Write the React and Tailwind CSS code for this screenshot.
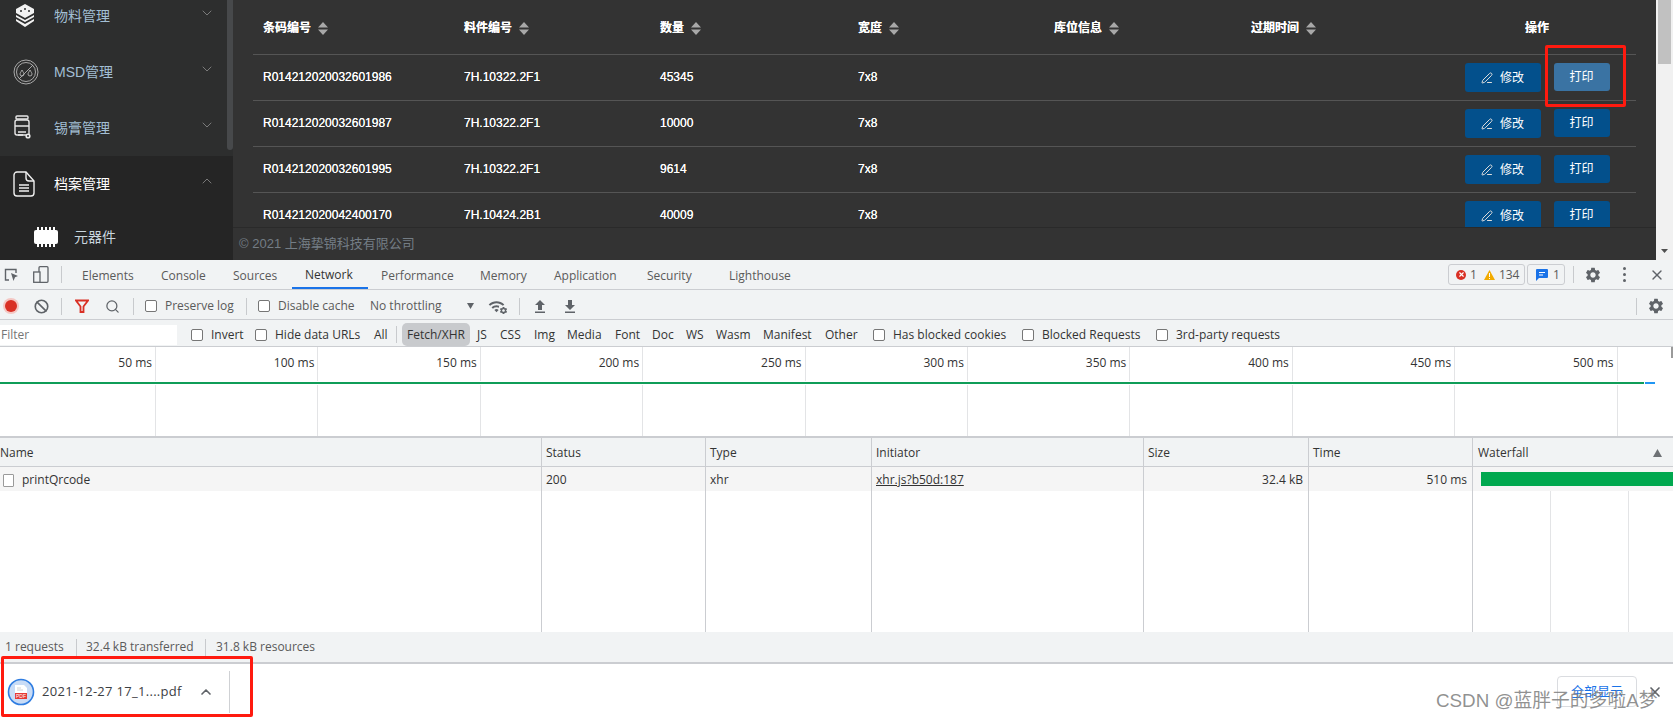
import { ChevronDown, ChevronUp, PenLine, Search, Ban, X } from 'lucide-react'
import { MdSettings, MdWifi } from 'react-icons/md'

const rows = [
  { code: 'R014212020032601986', part: '7H.10322.2F1', qty: '45345', hot: true },
  { code: 'R014212020032601987', part: '7H.10322.2F1', qty: '10000' },
  { code: 'R014212020032601995', part: '7H.10322.2F1', qty: '9614' },
  { code: 'R014212020042400170', part: '7H.10424.2B1', qty: '40009' },
]

const headers = ['条码编号', '料件编号', '数量', '宽度', '库位信息', '过期时间']

function StackIcon() {
  return (
    <svg width="24" height="26" viewBox="0 0 24 26" fill="#f2f2f2">
      <path d="M12 1l9 5v4l-9 5-9-5V6z" />
      <path d="M3 12l9 5 9-5v2l-9 5-9-5z" />
      <path d="M3 16l9 5 9-5v2l-9 6-9-6z" />
      <circle cx="12" cy="6" r="1" fill="#2d2e2e" />
      <circle cx="8" cy="8" r="1" fill="#2d2e2e" />
      <circle cx="16" cy="8" r="1" fill="#2d2e2e" />
    </svg>
  )
}

function MsdIcon() {
  return (
    <svg width="26" height="26" viewBox="0 0 26 26" fill="none" stroke="#b5b5b5" strokeWidth="0.9">
      <circle cx="13" cy="13" r="12" />
      <circle cx="13" cy="13" r="9.500" />
      <path d="M6 20L20 6" />
      <path d="M9 11c-1 2-2 3-2 4a2 2 0 0 0 4 0c0-1-1-2-2-4zM17 11c-1 2-2 3-2 4a2 2 0 0 0 4 0c0-1-1-2-2-4z" />
    </svg>
  )
}

function JarIcon() {
  return (
    <svg width="20" height="26" viewBox="0 0 20 26" fill="none" stroke="#e8e8e8" strokeWidth="1.400">
      <rect x="3" y="1" width="12" height="3" rx="1" />
      <path d="M2 7a2 2 0 0 1 2-2h10a2 2 0 0 1 2 2v13H4a2 2 0 0 1-2-2z" />
      <path d="M2 11h14M5 17h8M5 20h5" />
      <circle cx="15" cy="21" r="2.600" fill="#e8e8e8" stroke="none" />
      <circle cx="15" cy="21" r="1" fill="#2d2e2e" stroke="none" />
    </svg>
  )
}

function FileIcon() {
  return (
    <svg width="22" height="26" viewBox="0 0 22 26" fill="none" stroke="#f0f0f0" strokeWidth="1.400">
      <path d="M4 1h9l8 9v12a3 3 0 0 1-3 3H4a3 3 0 0 1-3-3V4a3 3 0 0 1 3-3z" />
      <path d="M13 1v6a3 3 0 0 0 3 3h5" />
      <path d="M6 14h10M6 17h10M6 20h10" />
    </svg>
  )
}

function ChipIcon() {
  return (
    <svg width="24" height="20" viewBox="0 0 24 20" fill="#ffffff">
      <rect x="0" y="3" width="24" height="14" rx="2" />
      <path d="M3 0h2v3H3zM7 0h2v3H7zM11 0h2v3h-2zM15 0h2v3h-2zM19 0h2v3h-2zM3 17h2v3H3zM7 17h2v3H7zM11 17h2v3h-2zM15 17h2v3h-2zM19 17h2v3h-2z" />
    </svg>
  )
}

function SideItem({ icon, label, open }) {
  return (
    <div className={`h-[56px] flex items-center ${open ? 'text-white' : 'text-[#a3bfd4]'}`}>
      <div className="w-[54px] pl-[13px] shrink-0 flex justify-start">{icon}</div>
      <span className="flex-1 text-[14px]">{label}</span>
      {open ? (
        <ChevronUp size={16} strokeWidth={1.25} className="text-[#8a8a8a] mr-[18px] -translate-y-[3px]" />
      ) : (
        <ChevronDown size={16} strokeWidth={1.25} className="text-[#8a8a8a] mr-[18px] -translate-y-[3px]" />
      )}
    </div>
  )
}

function Sidebar() {
  return (
    <aside className="relative w-[233px] shrink-0 bg-[#2d2e2e] overflow-hidden">
      <div className="-mt-[12px]">
        <SideItem icon={<StackIcon />} label="物料管理" />
        <SideItem icon={<MsdIcon />} label="MSD管理" />
        <SideItem icon={<JarIcon />} label="锡膏管理" />
        <div className="bg-[#252525] h-[200px]">
          <SideItem icon={<FileIcon />} label="档案管理" open />
          <div className="h-[50px] flex items-center pl-[34px] text-[14px] text-[#c9d6df]">
            <ChipIcon />
            <span className="ml-[16px]">元器件</span>
          </div>
        </div>
      </div>
      <div className="absolute right-0 top-0 w-[6px] h-[150px] bg-[#47494b] rounded-b-[3px]" />
    </aside>
  )
}

function SortCaret() {
  return (
    <svg width="10" height="13" viewBox="0 0 10 13" fill="#a8a8a8" className="ml-[7px]">
      <path d="M5 0l5 5.500H0zM5 13l5-5.500H0z" />
    </svg>
  )
}

function RecordTable() {
  return (
    <div className="ml-[20px] w-[1383px] text-[12px] text-white [text-shadow:0_0_0.6px_#ffffff]">
      <div className="grid grid-cols-[201px_196px_198px_196px_197px_197px_198px] h-[55px] pt-[2px] border-b border-[#555555] items-center font-bold">
        {headers.map((h) => (
          <div key={h} className="pl-[10px] flex items-center">
            {h}
            <SortCaret />
          </div>
        ))}
        <div className="text-center">操作</div>
      </div>
      {rows.map((r) => (
        <div
          key={r.code}
          className="grid grid-cols-[201px_196px_198px_196px_197px_197px_198px] h-[46px] border-b border-[#555555] items-center"
        >
          <div className="pl-[10px] pb-[2px]">{r.code}</div>
          <div className="pl-[10px] pb-[2px]">{r.part}</div>
          <div className="pl-[10px] pb-[2px]">{r.qty}</div>
          <div className="pl-[10px] pb-[2px]">7x8</div>
          <div />
          <div />
          <div className="flex justify-center gap-[13px]">
            <button className="w-[76px] h-[29px] rounded-[3px] bg-[#03508c] flex items-center justify-center gap-[7px]">
              <PenLine size={12} className="text-[#dddddd]" />
              修改
            </button>
            <button className={`w-[56px] h-[28px] rounded-[3px] ${r.hot ? 'bg-[#3a73a3]' : 'bg-[#03508c]'}`}>
              打印
            </button>
          </div>
        </div>
      ))}
    </div>
  )
}

function PageScrollbar() {
  return (
    <div className="w-[17px] shrink-0 bg-[#f1f1f1] flex flex-col justify-between">
      <div className="h-[64px] mt-0 bg-[#c1c1c1] mx-[2px]" />
      <svg width="17" height="17" viewBox="0 0 17 17" fill="#505050">
        <path d="M5 6h7l-3.500 4z" />
      </svg>
    </div>
  )
}

function AppShell() {
  return (
    <div className="h-[260px] flex bg-[#333333] overflow-hidden">
      <Sidebar />
      <main className="flex-1 min-w-0 flex flex-col">
        <div className="h-[227px] overflow-hidden">
          <RecordTable />
        </div>
        <div className="flex-1 border-t border-[#2a2a2a] pl-[6px] flex items-center text-[13px] text-[#747d85]">
          © 2021 上海挚锦科技有限公司
        </div>
      </main>
      <PageScrollbar />
    </div>
  )
}

function Divider({ className = '' }) {
  return <div className={`w-px h-[17px] bg-[#c8cacd] shrink-0 ${className}`} />
}

function Check({ className = '' }) {
  return <span className={`w-[12px] h-[12px] shrink-0 bg-white border border-[#767676] rounded-[2px] ${className}`} />
}

function TabsRow() {
  return (
    <div className="h-[30px] flex items-center border-b border-[#cbcdd1] text-[#5a5a5a] text-[12px]">
      <svg width="16" height="14" viewBox="0 0 16 14" className="ml-[4px] shrink-0" fill="none" stroke="#5f6368" strokeWidth="1.400">
        <path d="M5 12H1.500V1.500H12V5" />
        <path d="M7 5l7 3-3 1.300L9.500 13z" fill="#5f6368" stroke="none" />
      </svg>
      <svg width="16" height="17" viewBox="0 0 16 17" className="ml-[13px] shrink-0" fill="none" stroke="#5f6368" strokeWidth="1.300">
        <rect x="6" y="0.700" width="9" height="15.600" rx="1" />
        <rect x="0.700" y="6" width="6.300" height="10.300" fill="#f1f3f4" />
      </svg>
      <Divider className="ml-[12px]" />
      <div className="flex h-full">
        <Tab className="w-[79px] ml-[7px]">Elements</Tab>
        <Tab className="w-[72px]">Console</Tab>
        <Tab className="w-[72px]">Sources</Tab>
        <Tab className="w-[76px] text-[#333333] border-b-2 border-[#1a73e8]">Network</Tab>
        <Tab className="w-[99px]">Performance</Tab>
        <Tab className="w-[74px]">Memory</Tab>
        <Tab className="w-[93px]">Application</Tab>
        <Tab className="w-[82px]">Security</Tab>
        <Tab className="w-[90px]">Lighthouse</Tab>
      </div>
      <div className="ml-auto flex items-center">
        <div className="w-[77px] h-[21px] border border-[#cbcdd1] rounded-[3px] flex items-center text-[12px]">
          <span className="ml-[7px] w-[10px] h-[10px] rounded-full bg-[#d93025] text-white flex items-center justify-center">
            <X size={7} strokeWidth={4} />
          </span>
          <span className="ml-[4px]">1</span>
          <svg width="11" height="10" viewBox="0 0 11 10" className="ml-[7px]">
            <path d="M5.500 0L11 10H0z" fill="#f2ab00" />
            <path d="M5 3h1v4H5zM5 8h1v1H5z" fill="#ffffff" />
          </svg>
          <span className="ml-[4px]">134</span>
        </div>
        <div className="ml-[2px] w-[38px] h-[21px] border border-[#cbcdd1] rounded-[3px] flex items-center">
          <svg width="12" height="12" viewBox="0 0 12 12" className="ml-[8px]">
            <path d="M1 0h10a1 1 0 0 1 1 1v7a1 1 0 0 1-1 1H3l-3 3V1a1 1 0 0 1 1-1z" fill="#1a73e8" />
            <path d="M3 3h6v1H3zM3 5.500h4v1H3z" fill="#ffffff" />
          </svg>
          <span className="ml-[5px]">1</span>
        </div>
        <Divider className="ml-[8px]" />
        <MdSettings size={18} className="ml-[10px] text-[#5f6368]" />
        <div className="ml-[21px] flex flex-col gap-[3px]">
          <span className="w-[3px] h-[3px] rounded-full bg-[#5f6368]" />
          <span className="w-[3px] h-[3px] rounded-full bg-[#5f6368]" />
          <span className="w-[3px] h-[3px] rounded-full bg-[#5f6368]" />
        </div>
        <X size={16} strokeWidth={2} className="ml-[23px] mr-[8px] text-[#5f6368]" />
      </div>
    </div>
  )
}

function Tab({ className = '', children }) {
  return <div className={`h-full pl-[13px] pt-[3px] flex items-center shrink-0 ${className}`}>{children}</div>
}

function NetworkToolbar() {
  return (
    <div className="h-[30px] pt-[3px] flex items-center border-b border-[#cbcdd1] text-[#5a5a5a] text-[12px]">
      <div className="w-[22px] flex justify-center shrink-0">
        <span className="w-[12px] h-[12px] rounded-full bg-[#d93025] ring-2 ring-[#f4c7c3]" />
      </div>
      <div className="w-[39px] flex justify-center shrink-0">
        <Ban size={15} strokeWidth={2.6} className="text-[#5f6368]" />
      </div>
      <Divider />
      <div className="w-[40px] flex justify-center shrink-0">
        <svg width="14" height="14" viewBox="0 0 14 14" fill="none" stroke="#d93025" strokeWidth="1.800">
          <path d="M1 1.500h12L8.500 7.500V13h-3V7.500z" />
        </svg>
      </div>
      <div className="w-[20px] flex justify-center shrink-0">
        <Search size={15} className="text-[#5f6368]" />
      </div>
      <Divider className="ml-[11px]" />
      <Check className="ml-[11px]" />
      <span className="ml-[8px] w-[73px] shrink-0">Preserve log</span>
      <Divider className="ml-[8px]" />
      <Check className="ml-[11px]" />
      <span className="ml-[8px] w-[92px] shrink-0">Disable cache</span>
      <span className="w-[98px] shrink-0">No throttling</span>
      <svg width="7" height="6" viewBox="0 0 7 6" fill="#5f6368" className="shrink-0 -ml-[1px]">
        <path d="M0 0h7L3.500 6z" />
      </svg>
      <div className="relative ml-[14px] shrink-0 w-[20px]">
        <MdWifi size={17} className="text-[#5f6368]" />
        <MdSettings size={9} className="absolute right-0 bottom-0 text-[#5f6368] bg-[#f1f3f4]" />
      </div>
      <Divider className="ml-[11px]" />
      <svg width="12" height="13" viewBox="0 0 12 13" fill="#5f6368" className="ml-[14px] shrink-0">
        <path d="M6 0l5 5H8v5H4V5H1zM1 11.500h10V13H1z" />
      </svg>
      <svg width="12" height="13" viewBox="0 0 12 13" fill="#5f6368" className="ml-[18px] shrink-0">
        <path d="M6 10l5-5H8V0H4v5H1zM1 11.500h10V13H1z" />
      </svg>
      <div className="ml-auto flex items-center">
        <Divider />
        <MdSettings size={18} className="ml-[10px] mr-[8px] text-[#5f6368]" />
      </div>
    </div>
  )
}

function FilterBar() {
  return (
    <div className="h-[27px] pt-[3px] flex items-center border-b border-[#cbcdd1] text-[#333333] text-[12px]">
      <div className="w-[177px] h-[20px] bg-white pl-[1px] text-[#757575] flex items-center shrink-0">Filter</div>
      <Check className="ml-[14px]" />
      <span className="ml-[8px] w-[44px] shrink-0">Invert</span>
      <Check />
      <span className="ml-[8px] w-[99px] shrink-0">Hide data URLs</span>
      <span className="w-[22px] shrink-0">All</span>
      <Divider />
      <span className="ml-[5px] w-[68px] h-[23px] rounded-[5px] bg-[#c8cacd] flex items-center justify-center shrink-0">
        Fetch/XHR
      </span>
      <span className="ml-[7px] w-[23px] shrink-0">JS</span>
      <span className="w-[34px] shrink-0">CSS</span>
      <span className="w-[33px] shrink-0">Img</span>
      <span className="w-[48px] shrink-0">Media</span>
      <span className="w-[37px] shrink-0">Font</span>
      <span className="w-[34px] shrink-0">Doc</span>
      <span className="w-[30px] shrink-0">WS</span>
      <span className="w-[47px] shrink-0">Wasm</span>
      <span className="w-[62px] shrink-0">Manifest</span>
      <span className="w-[48px] shrink-0">Other</span>
      <Check />
      <span className="ml-[8px] w-[129px] shrink-0">Has blocked cookies</span>
      <Check />
      <span className="ml-[8px] w-[114px] shrink-0">Blocked Requests</span>
      <Check />
      <span className="ml-[8px] shrink-0">3rd-party requests</span>
    </div>
  )
}

function Timeline() {
  const ticks = ['50 ms', '100 ms', '150 ms', '200 ms', '250 ms', '300 ms', '350 ms', '400 ms', '450 ms', '500 ms']
  return (
    <div className="relative h-[89px] bg-white flex overflow-hidden text-[12px] text-[#333333]">
      {ticks.map((t, i) => (
        <div
          key={t}
          className={`h-full shrink-0 border-r border-[#e3e4e6] text-right pr-[3px] pt-[7px] ${i === 0 ? 'w-[156px]' : 'w-[162.4px]'}`}
        >
          {t}
        </div>
      ))}
      <div className="absolute left-0 top-[35px] w-[1644px] h-[2px] bg-[#0f9d58] ring-1 ring-white" />
      <div className="absolute left-[1645px] top-[35px] w-[10px] h-[2px] bg-[#2196f3] ring-1 ring-white" />
      <div className="absolute right-0 top-0 w-[2px] h-[11px] bg-[#9a9a9a]" />
    </div>
  )
}

function RequestTable() {
  const cols = 'grid grid-cols-[542px_164px_166px_272px_165px_164px_1fr]'
  const cell = 'border-r border-[#cbcdd1] pl-[4px] pt-[2px] flex items-center'
  return (
    <div className="h-[196px] flex flex-col border-t-2 border-[#cbcdd1] text-[12px] text-[#333333]">
      <div className={`${cols} h-[29px] bg-[#f1f3f4] border-b border-[#cbcdd1] shrink-0`}>
        <div className="border-r border-[#cbcdd1] pt-[2px] flex items-center">Name</div>
        <div className={cell}>Status</div>
        <div className={cell}>Type</div>
        <div className={cell}>Initiator</div>
        <div className={cell}>Size</div>
        <div className={cell}>Time</div>
        <div className="pl-[5px] pr-[11px] pt-[2px] flex items-center justify-between">
          Waterfall
          <svg width="9" height="8" viewBox="0 0 9 8" fill="#6e7175">
            <path d="M4.500 0L9 8H0z" />
          </svg>
        </div>
      </div>
      <div className={`${cols} h-[24px] bg-[#f5f5f5] shrink-0`}>
        <div className="border-r border-[#cbcdd1] pt-[2px] flex items-center pl-[3px]">
          <span className="w-[11px] h-[13px] border border-[#9a9a9a] rounded-[1px] bg-white" />
          <span className="ml-[8px]">printQrcode</span>
        </div>
        <div className={cell}>200</div>
        <div className={cell}>xhr</div>
        <div className={`${cell} underline`}>xhr.js?b50d:187</div>
        <div className={`${cell} justify-end pr-[5px]`}>32.4 kB</div>
        <div className={`${cell} justify-end pr-[5px]`}>510 ms</div>
        <WaterfallBar />
      </div>
      <div className={`${cols} flex-1 bg-white`}>
        <div className="border-r border-[#cbcdd1]" />
        <div className="border-r border-[#cbcdd1]" />
        <div className="border-r border-[#cbcdd1]" />
        <div className="border-r border-[#cbcdd1]" />
        <div className="border-r border-[#cbcdd1]" />
        <div className="border-r border-[#cbcdd1]" />
        <div className="grid grid-cols-[78px_78px_1fr]">
          <div className="border-r border-[#e3e4e6]" />
          <div className="border-r border-[#e3e4e6]" />
          <div />
        </div>
      </div>
    </div>
  )
}

function WaterfallBar() {
  return (
    <div className="flex items-center pl-[8px] overflow-hidden">
      <div className="h-[14px] flex-1 bg-[#00a84f]" />
    </div>
  )
}

function StatusBar() {
  return (
    <div className="h-[32px] bg-[#f1f3f4] border-b-2 border-[#cbcdd1] flex items-center text-[12px] text-[#5a5a5a]">
      <span className="ml-[5px] w-[71px] shrink-0">1 requests</span>
      <Divider />
      <span className="ml-[9px] w-[119px] shrink-0">32.4 kB transferred</span>
      <Divider />
      <span className="ml-[10px]">31.8 kB resources</span>
    </div>
  )
}

function PdfBadge() {
  return (
    <svg width="28" height="28" viewBox="0 0 28 28" className="shrink-0">
      <circle cx="14" cy="14" r="12.500" fill="#c9dcf6" stroke="#2f7de1" strokeWidth="1.600" />
      <path d="M8 7h9l3 3v11H8z" fill="#ffffff" />
      <path d="M10 10h4M10 12h6" stroke="#c6c6c6" strokeWidth="0.800" />
      <rect x="8" y="15" width="12" height="6" fill="#e53935" />
      <text x="14" y="20" textAnchor="middle" fontSize="5" fill="#ffffff" fontFamily="Liberation Sans">PDF</text>
    </svg>
  )
}

function DownloadBar() {
  return (
    <div className="h-[55px] bg-white flex items-center">
      <div className="ml-[7px] flex items-center">
        <PdfBadge />
        <span className="ml-[7px] w-[156px] text-[13px] tracking-[0.3px] text-[#3c4043] shrink-0">2021-12-27 17_1....pdf</span>
        <ChevronUp size={16} strokeWidth={2.5} className="text-[#5f6368]" />
      </div>
      <div className="ml-[15px] w-px h-[42px] bg-[#cfd1d4]" />
      <div className="ml-auto flex items-center">
        <button className="w-[80px] h-[31px] border border-[#dadce0] rounded-[4px] text-[13px] text-[#1a73e8]">全部显示</button>
        <X size={16} strokeWidth={2.5} className="ml-[10px] mr-[10px] text-[#5f6368]" />
      </div>
    </div>
  )
}

export default function App() {
  return (
    <div className="relative w-[1673px] h-[719px] overflow-hidden bg-white font-['Liberation_Sans','Noto_Sans_CJK_SC',sans-serif]">
      <AppShell />
      <div className="bg-[#f1f3f4] font-['Open_Sans','Noto_Sans_CJK_SC',sans-serif]">
        <TabsRow />
        <NetworkToolbar />
        <FilterBar />
        <Timeline />
        <RequestTable />
        <StatusBar />
        <DownloadBar />
      </div>

      {/* annotations drawn over the screenshot */}
      <div className="absolute left-[1545px] top-[45px] w-[81px] h-[62px] border-[3px] border-[#ff1a0f] rounded-[2px]" />
      <div className="absolute left-[1px] top-[656px] w-[252px] h-[61px] border-[3px] border-[#ff1a0f] rounded-[2px]" />
      <div className="absolute left-[1436px] top-[689px] text-[18.800px] leading-[24px] text-[#7d7d7d]/85 whitespace-nowrap">
        CSDN @蓝胖子的多啦A梦
      </div>
    </div>
  )
}
